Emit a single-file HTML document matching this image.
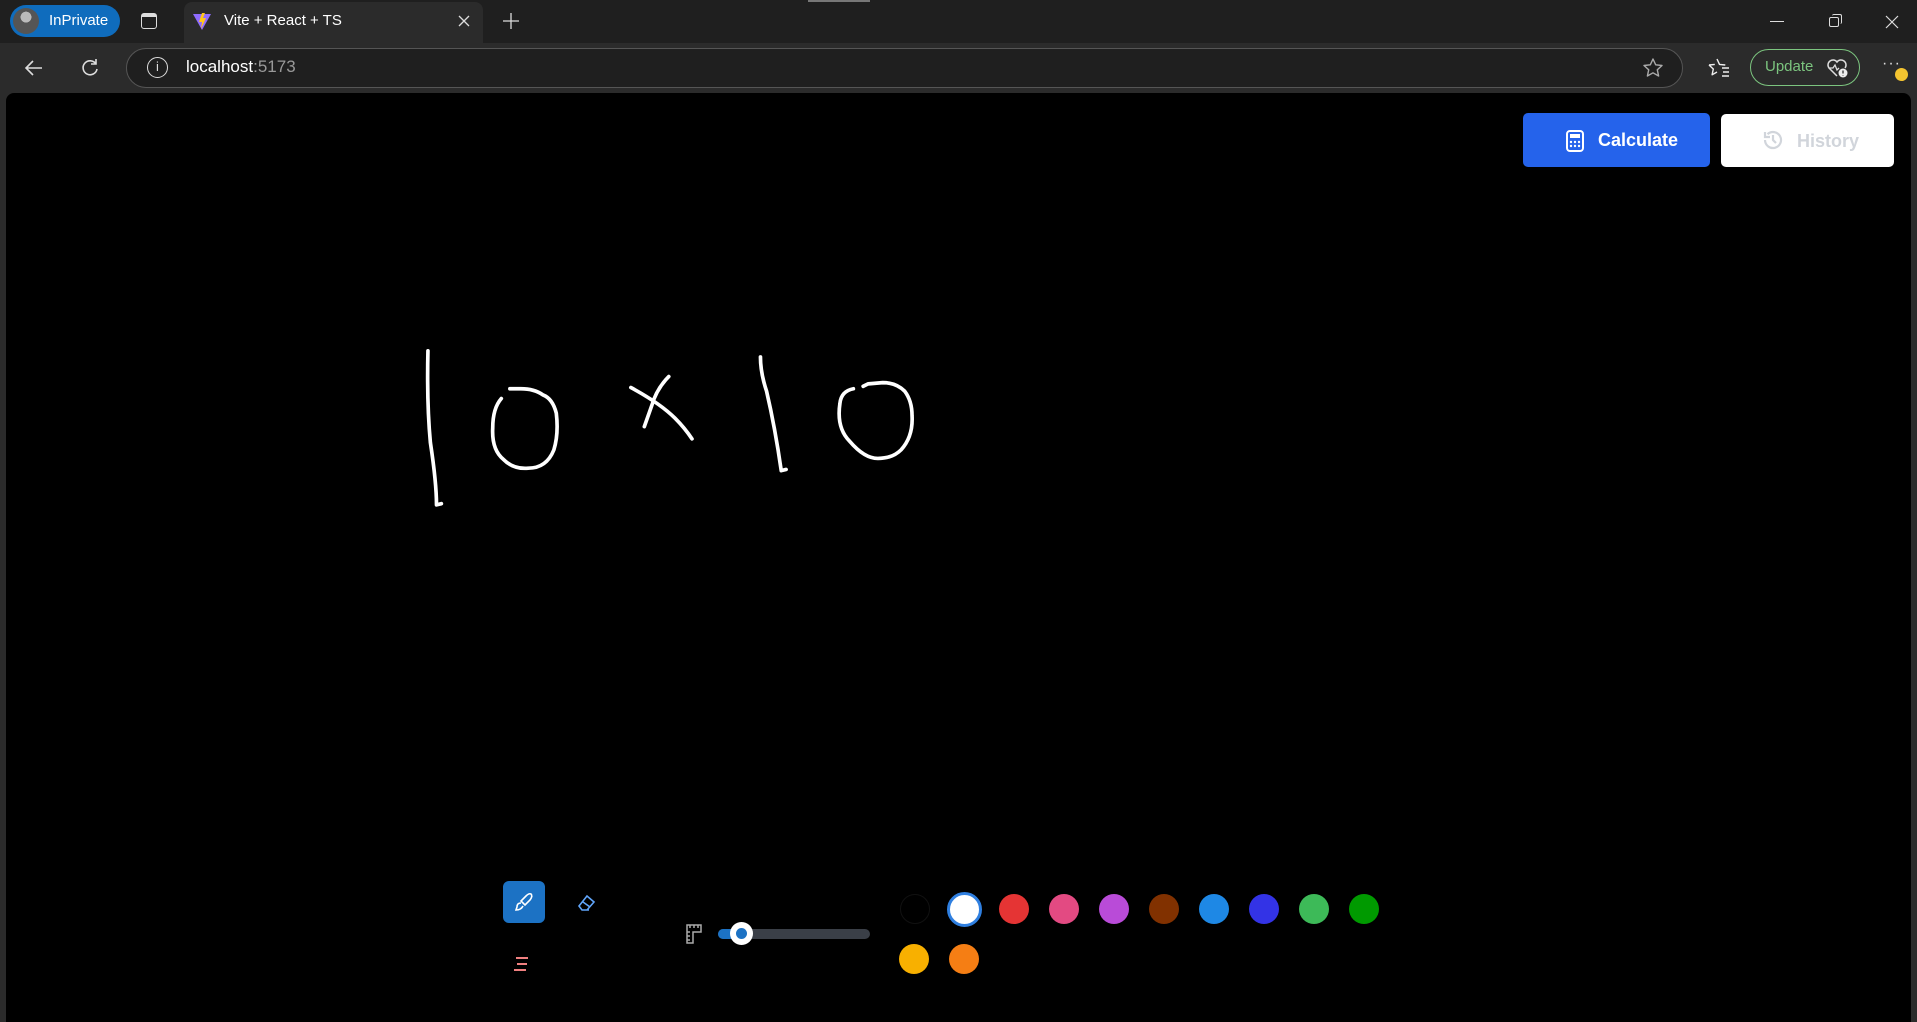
<!DOCTYPE html>
<html><head><meta charset="utf-8">
<style>
*{margin:0;padding:0;box-sizing:border-box}
body{width:1917px;height:1022px;background:#2b2b2b;font-family:"Liberation Sans",sans-serif;position:relative;overflow:hidden}
.abs{position:absolute}
</style></head><body>
<!-- tab bar -->
<div class="abs" style="left:0;top:0;width:1917px;height:43px;background:#1f1f1f"></div>
<div class="abs" style="left:808px;top:0;width:62px;height:2px;background:#777"></div>
<div class="abs" style="left:10px;top:5px;width:110px;height:32px;border-radius:16px;background:#0f6cbd"></div>
<div class="abs" style="left:13px;top:8px;width:26px;height:26px;border-radius:13px;background:radial-gradient(circle at 50% 35%,#bbb 0 25%,#555 26% 100%)"></div>
<div class="abs" style="left:49px;top:12px;color:#fff;font-size:15px">InPrivate</div>
<div class="abs" style="left:141px;top:13px;width:16px;height:16px;border:1.5px solid #ddd;border-radius:3px;border-top-width:4px"></div>
<div class="abs" style="left:184px;top:2px;width:299px;height:41px;background:#2b2b2b;border-radius:8px 8px 0 0"></div>
<svg class="abs" style="left:192px;top:11px" width="20" height="20" viewBox="0 0 20 20"><path d="M1 3 L10 19 L19 3 Z" fill="#8f6cff"/><path d="M10 2 L7 11 L10 11 L9 18 L14 7 L11 7 L13 2Z" fill="#ffc61a"/></svg>
<div class="abs" style="left:224px;top:12px;color:#fff;font-size:15px">Vite + React + TS</div>
<svg class="abs" style="left:458px;top:15px" width="12" height="12" viewBox="0 0 12 12"><path d="M1 1L11 11M11 1L1 11" stroke="#ddd" stroke-width="1.3"/></svg>
<svg class="abs" style="left:502px;top:12px" width="18" height="18" viewBox="0 0 18 18"><path d="M9 1V17M1 9H17" stroke="#ddd" stroke-width="1.3"/></svg>
<div class="abs" style="left:1770px;top:21px;width:14px;height:1px;background:#ddd"></div>
<div class="abs" style="left:1829px;top:17px;width:10px;height:10px;border:1px solid #ddd;border-radius:2px"></div>
<div class="abs" style="left:1832px;top:14px;width:10px;height:10px;border-top:1px solid #ddd;border-right:1px solid #ddd;border-radius:2px"></div>
<svg class="abs" style="left:1885px;top:15px" width="14" height="14" viewBox="0 0 14 14"><path d="M1 1L13 13M13 1L1 13" stroke="#ddd" stroke-width="1.2"/></svg>
<!-- address row -->
<svg class="abs" style="left:22px;top:56px" width="24" height="24" viewBox="0 0 24 24"><path d="M20 12H4M11 5L4 12l7 7" stroke="#ddd" stroke-width="1.6" fill="none"/></svg>
<svg class="abs" style="left:78px;top:56px" width="24" height="24" viewBox="0 0 24 24"><path d="M18 8A7 7 0 1 0 19 13M18 3v5h-5" stroke="#ddd" stroke-width="1.6" fill="none"/></svg>
<div class="abs" style="left:126px;top:48px;width:1557px;height:40px;border-radius:20px;background:#1f1f1f;border:1px solid #555"></div>
<div class="abs" style="left:147px;top:57px;width:21px;height:21px;border:1.5px solid #ddd;border-radius:50%;color:#ddd;font-size:13px;text-align:center;line-height:18px">i</div>
<div class="abs" style="left:186px;top:57px;color:#fff;font-size:17px">localhost<span style="color:#999">:5173</span></div>
<svg class="abs" style="left:1642px;top:57px" width="22" height="22" viewBox="0 0 22 22"><path d="M11 2l2.7 5.8 6.3.7-4.7 4.3 1.3 6.2L11 15.8 5.4 19l1.3-6.2L2 8.5l6.3-.7z" stroke="#aaa" stroke-width="1.4" fill="none" stroke-linejoin="round"/></svg>
<svg class="abs" style="left:1707px;top:57px" width="24" height="22" viewBox="0 0 24 22"><path d="M10 2l2.5 5.4 5.8.6M2 8l5.8-.6M2 8l4.3 4-1.2 5.8L10 15M22 11h-7M22 15h-6M22 19h-7" stroke="#eee" stroke-width="1.4" fill="none" stroke-linejoin="round"/></svg>
<div class="abs" style="left:1750px;top:49px;width:110px;height:37px;border-radius:19px;border:1.5px solid #7cc57f"></div>
<div class="abs" style="left:1765px;top:58px;color:#7cc57f;font-size:15px">Update</div>
<svg class="abs" style="left:1826px;top:57px" width="22" height="22" viewBox="0 0 22 22"><path d="M11 19L3 11A4.5 4.5 0 0 1 11 5A4.5 4.5 0 0 1 19 11" stroke="#ddd" stroke-width="1.5" fill="none"/><path d="M3 11h4l2-3 2 5 2-2" stroke="#ddd" stroke-width="1.3" fill="none"/><circle cx="17" cy="16" r="4.5" fill="#eee"/><path d="M17 13.5v3M17 18v.5" stroke="#333" stroke-width="1.3"/></svg>
<div class="abs" style="left:1882px;top:55px;color:#ddd;font-size:16px;letter-spacing:1px">···</div>
<div class="abs" style="left:1895px;top:68px;width:13px;height:13px;border-radius:50%;background:#f4c430"></div>
<!-- canvas -->
<div class="abs" style="left:6px;top:93px;width:1905px;height:929px;background:#000;border-radius:8px 8px 0 0"></div>
<svg class="abs" style="left:0;top:0" width="1917" height="1022" viewBox="0 0 1568 836" fill="none" stroke="#fff" stroke-width="3" stroke-linecap="round" stroke-linejoin="round">
<path d="M350 287 Q349 330 352 362 Q357 395 357 413 L361 412"/>
<path d="M410 326 Q403 334 403 350 Q402 368 412 376 Q420 384 432 383 Q447 383 453 368 Q457 355 455 338 Q452 326 444 323 Q437 318 426 318 L417 318"/>
<path d="M516 317 Q540 330 552 342 Q560 350 566 359"/>
<path d="M547 308 Q537 318 533 332 L527 349"/>
<path d="M622 292 Q622 305 627 320 Q634 350 639 385 L643 384"/>
<path d="M698 318 Q688 320 687 330 Q684 350 695 361 Q707 375 718 375 Q730 375 737 368 Q747 357 746 340 Q746 328 740 320 Q733 313 722 313 L710 314 L706 316"/>
</svg>
<!-- buttons -->
<div class="abs" style="left:1523px;top:113px;width:187px;height:54px;border-radius:5px;background:#2563eb"></div>
<svg class="abs" style="left:1565px;top:130px" width="20" height="22" viewBox="0 0 20 22"><rect x="2" y="1" width="16" height="20" rx="3" stroke="#fff" stroke-width="2" fill="none"/><rect x="5" y="4" width="10" height="4" fill="#fff"/><g fill="#fff"><circle cx="6" cy="12" r="1.2"/><circle cx="10" cy="12" r="1.2"/><circle cx="14" cy="12" r="1.2"/><circle cx="6" cy="16" r="1.2"/><circle cx="10" cy="16" r="1.2"/><circle cx="14" cy="16" r="1.2"/></g></svg>
<div class="abs" style="left:1598px;top:130px;color:#fff;font-size:18px;font-weight:bold">Calculate</div>
<div class="abs" style="left:1721px;top:114px;width:173px;height:53px;border-radius:5px;background:#fff"></div>
<svg class="abs" style="left:1762px;top:129px" width="22" height="22" viewBox="0 0 22 22"><path d="M3 11a8 8 0 1 0 2.5-5.8M3 3v5h5M11 6v5l3 3" stroke="#d1d5db" stroke-width="2.2" fill="none"/></svg>
<div class="abs" style="left:1797px;top:131px;color:#d1d5db;font-size:18px;font-weight:bold">History</div>
<!-- toolbar -->
<div class="abs" style="left:503px;top:881px;width:42px;height:42px;border-radius:6px;background:#1c72c4"></div>
<svg class="abs" style="left:513px;top:891px" width="22" height="22" viewBox="0 0 22 22"><path d="M18 3 Q20 5 17 9 L12 14 L8 10 L13 5 Q16 2 18 3 Z M8 12 Q4 12 4 16 L3 19 Q8 19 10 15" stroke="#fff" stroke-width="1.6" fill="none"/></svg>
<svg class="abs" style="left:575px;top:892px" width="22" height="22" viewBox="0 0 22 22"><path d="M4 14 L12 4 L19 10 L12 18 H7 Z M8 10 L15 15 M7 18 H14" stroke="#60a5fa" stroke-width="1.6" fill="none"/></svg>
<div class="abs" style="left:516px;top:957px;width:12px;height:2px;background:#f08080"></div>
<div class="abs" style="left:517px;top:963px;width:10px;height:2px;background:#f08080"></div>
<div class="abs" style="left:514px;top:969px;width:12px;height:2px;background:#f08080"></div>
<svg class="abs" style="left:685px;top:924px" width="18" height="20" viewBox="0 0 18 20"><path d="M2 1 H16 V8 H8 V19 H2 Z M5 1 V4 M9 1 V4 M13 1 V4 M2 8 H5 M2 12 H5 M2 16 H5" stroke="#aaa" stroke-width="1.5" fill="none"/></svg>
<div class="abs" style="left:718px;top:929px;width:152px;height:10px;border-radius:5px;background:#3a3f47"></div>
<div class="abs" style="left:718px;top:929px;width:24px;height:10px;border-radius:5px;background:#1c72c4"></div>
<div class="abs" style="left:730px;top:922px;width:23px;height:23px;border-radius:50%;background:#fff"></div>
<div class="abs" style="left:736px;top:928px;width:11px;height:11px;border-radius:50%;background:#1c72c4"></div>
<div class="abs" style="left:900px;top:894px;width:30px;height:30px;border-radius:50%;background:#000;border:1px solid #111"></div>
<div class="abs" style="left:947px;top:892px;width:35px;height:35px;border-radius:50%;background:#fff;border:3px solid #2f7fe0"></div>
<div class="abs" style="left:999px;top:894px;width:30px;height:30px;border-radius:50%;background:#e53434"></div>
<div class="abs" style="left:1049px;top:894px;width:30px;height:30px;border-radius:50%;background:#e34a82"></div>
<div class="abs" style="left:1099px;top:894px;width:30px;height:30px;border-radius:50%;background:#b94bd8"></div>
<div class="abs" style="left:1149px;top:894px;width:30px;height:30px;border-radius:50%;background:#813100"></div>
<div class="abs" style="left:1199px;top:894px;width:30px;height:30px;border-radius:50%;background:#1e88e5"></div>
<div class="abs" style="left:1249px;top:894px;width:30px;height:30px;border-radius:50%;background:#3333e6"></div>
<div class="abs" style="left:1299px;top:894px;width:30px;height:30px;border-radius:50%;background:#3dba58"></div>
<div class="abs" style="left:1349px;top:894px;width:30px;height:30px;border-radius:50%;background:#009a00"></div>
<div class="abs" style="left:899px;top:944px;width:30px;height:30px;border-radius:50%;background:#f8b000"></div>
<div class="abs" style="left:949px;top:944px;width:30px;height:30px;border-radius:50%;background:#f57e14"></div>
</body></html>
